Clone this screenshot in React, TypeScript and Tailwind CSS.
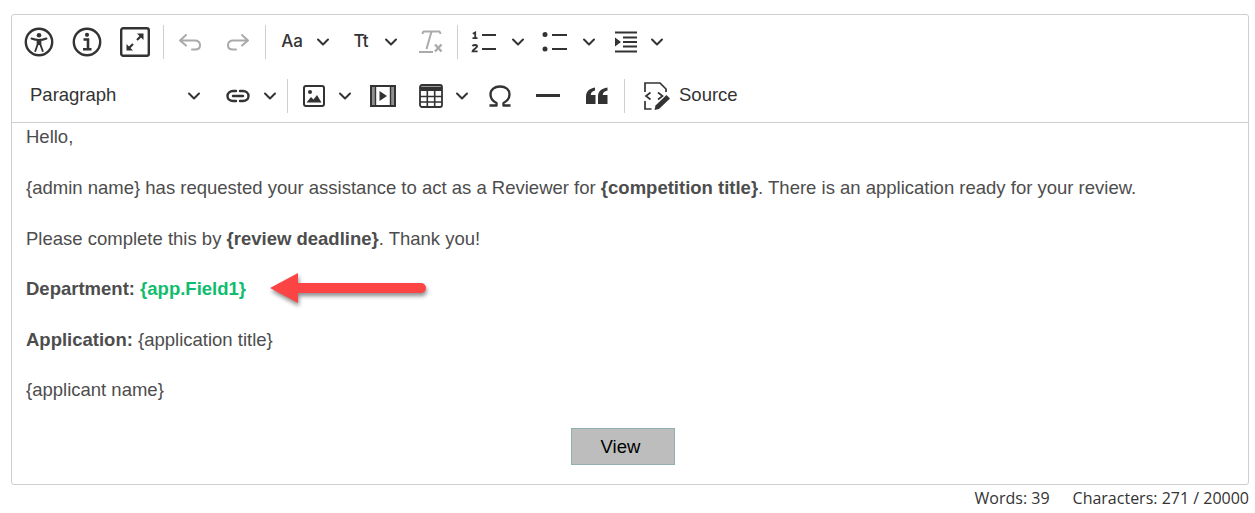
import React from "react"

const Chevron = ({ className = "" }: { className?: string }) => (
  <svg viewBox="0 0 14 10" className={`h-[10px] w-[14px] shrink-0 ${className}`} fill="none" stroke="#333" strokeWidth="2" strokeLinecap="round" strokeLinejoin="round">
    <path d="M2 2.5 7 7.5 12 2.5" />
  </svg>
)

const Sep = ({ className = "" }: { className?: string }) => <div className={`h-[34px] w-px shrink-0 bg-[#cfcfcf] ${className}`} />

const AccessIcon = () => (
  <svg viewBox="0 0 30 30" className="h-[30px] w-[30px]" fill="none" stroke="#333" strokeWidth="2.4">
    <circle cx="15" cy="15" r="13.2" />
    <circle cx="15" cy="8.2" r="2.3" fill="#333" stroke="none" />
    <path d="M7.5 11.5C10 12.5 12.5 13 15 13C17.5 13 20 12.5 22.5 11.5M13.6 13V17.5L11.3 24M16.4 13V17.5L18.7 24" strokeWidth="1.9" strokeLinecap="round" strokeLinejoin="round" />
    <path d="M13 13H17V18H13Z" fill="#333" stroke="none" />
  </svg>
)

const InfoIcon = () => (
  <svg viewBox="0 0 30 30" className="h-[30px] w-[30px]" fill="none" stroke="#333" strokeWidth="2.4">
    <circle cx="15" cy="15" r="13.2" />
    <circle cx="15" cy="7.8" r="2.1" fill="#333" stroke="none" />
    <path d="M11.5 12.5H16V21.5M11 22.2H19.5" strokeWidth="2.6" />
  </svg>
)

const ExpandIcon = () => (
  <svg viewBox="0 0 30 30" className="h-[30px] w-[30px]" fill="none" stroke="#333">
    <rect x="1.2" y="1.2" width="27.6" height="27.6" rx="2" strokeWidth="2.4" />
    <path d="M17 13 22 8M8 22 13 17" strokeWidth="2.2" />
    <path d="M17 6.5H23.5V13ZM6.5 17V23.5H13Z" fill="#333" stroke="none" />
  </svg>
)

const UndoIcon = ({ flip = false }: { flip?: boolean }) => (
  <svg viewBox="0 0 24 18" className={`h-[18px] w-[24px] ${flip ? "-scale-x-100" : ""}`} fill="none" stroke="#aaaaaa" strokeWidth="2" strokeLinecap="round" strokeLinejoin="round">
    <path d="M8 2 2 7.5 8 12.5M2 7.5H16.5C20 7.5 22 9.5 22 12.2C22 15 20 16.5 17 16.5H14" />
  </svg>
)

const ClearIcon = () => (
  <svg viewBox="0 0 26 26" className="h-[26px] w-[26px]" fill="none" stroke="#aaaaaa" strokeWidth="2">
    <path d="M5 2.5H22M5 2.5 4.5 5M22 2.5 22.3 5M13.5 2.5 8.5 20" />
    <path d="M1 23H15" />
    <path d="M17 15.5 23.5 22.5M23.5 15.5 17 22.5" strokeWidth="2.4" />
  </svg>
)

const NumListIcon = () => (
  <svg viewBox="0 0 26 22" className="h-[22px] w-[26px]" fill="none" stroke="#333" strokeWidth="2">
    <path d="M11 4H25M11 18H25" />
    <path d="M1.8 2.8 4.2 1.5V7M1.5 7.2H6.5" strokeWidth="1.8" />
    <path d="M1.6 15.2C2 13.6 6 13.6 6 15.4C6 17 2 18 1.6 20.4H6.6" strokeWidth="1.9" />
  </svg>
)

const BulletIcon = () => (
  <svg viewBox="0 0 26 22" className="h-[22px] w-[26px]" fill="none" stroke="#333" strokeWidth="2">
    <path d="M10 4H25M10 18H25" />
    <circle cx="3" cy="3.5" r="2.5" fill="#333" stroke="none" />
    <circle cx="3" cy="18" r="2.5" fill="#333" stroke="none" />
  </svg>
)

const IndentIcon = () => (
  <svg viewBox="0 0 24 22" className="h-[22px] w-[24px]" fill="none" stroke="#333" strokeWidth="2">
    <path d="M1 1.5H23M9 6.5H23M9 11H23M9 15.5H23M1 20.5H23" />
    <path d="M1 6.5 7 11 1 15.5Z" fill="#333" stroke="none" />
  </svg>
)

const LinkIcon = () => (
  <svg viewBox="0 0 24 14" className="h-[14px] w-[24px]" fill="none" stroke="#333" strokeWidth="2.4" strokeLinecap="round">
    <path d="M10 2H7C4 2 1.5 4 1.5 7C1.5 10 4 12 7 12H10M14 2H17C20 2 22.5 4 22.5 7C22.5 10 20 12 17 12H14M7 7H17" />
  </svg>
)

const ImageIcon = () => (
  <svg viewBox="0 0 22 22" className="h-[22px] w-[22px]" fill="none" stroke="#333">
    <rect x="1" y="1" width="20" height="20" rx="2" strokeWidth="2" />
    <circle cx="7" cy="7" r="2" fill="#333" stroke="none" />
    <path d="M3.5 17.5 8 12 10.5 14.5 14 10 18.5 17.5Z" fill="#333" stroke="none" />
  </svg>
)

const MediaIcon = () => (
  <svg viewBox="0 0 26 22" className="h-[22px] w-[26px]" fill="none" stroke="#333">
    <rect x="1" y="1" width="24" height="20" strokeWidth="2" />
    <path d="M5.5 1V21M20.5 1V21" strokeWidth="1.4" />
    <path d="M2 1H5V21H2ZM21 1H24V21H21Z" fill="#333" fillOpacity="0.55" stroke="none" />
    <path d="M9.5 6V16L17 11Z" fill="#333" stroke="none" />
  </svg>
)

const TableIcon = () => (
  <svg viewBox="0 0 24 24" className="h-[24px] w-[24px]" fill="none" stroke="#333">
    <rect x="1" y="1" width="22" height="22" rx="2" strokeWidth="1.8" />
    <path d="M1 2.5H23V7H1Z" fill="#333" stroke="none" />
    <path d="M1 12.5H23M1 18H23M8.3 7V23M15.7 7V23" strokeWidth="1.6" />
  </svg>
)

const OmegaIcon = () => (
  <svg viewBox="0 0 24 22" className="h-[22px] w-[24px]" fill="none" stroke="#333" strokeWidth="2.4">
    <path d="M1.5 20.5H8.5V18C4.5 16 2.5 13 2.5 9.5C2.5 4.5 6.5 1.5 12 1.5C17.5 1.5 21.5 4.5 21.5 9.5C21.5 13 19.5 16 15.5 18V20.5H22.5" strokeLinejoin="round" />
  </svg>
)

const QuoteIcon = () => (
  <svg viewBox="0 0 22 18" className="h-[18px] w-[22px]" fill="#333">
    <path d="M0 17V9.5C0 4.5 3 1.5 9 0.5V3.5C6 4.3 4.8 6 4.8 8H9.5V17ZM12 17V9.5C12 4.5 15 1.5 21.5 0.5V3.5C18 4.3 16.8 6 16.8 8H21.5V17Z" />
  </svg>
)

const SourceIcon = () => (
  <svg viewBox="0 0 28 30" className="h-[30px] w-[28px]" fill="none" stroke="#333" strokeWidth="1.7">
    <path d="M2 11V2H17L23 8V11M2 20V28H8.5" />
    <path d="M7.5 11.5 3 15 7.5 18.5M15 11.5 19.5 15 15 18.5" />
    <path d="M11.5 29 12.5 24.5 23.5 14 27 17.5 16 28Z" fill="#333" stroke="none" />
  </svg>
)

const Btn = ({ className, children }: { className: string; children: React.ReactNode }) => (
  <div className={`flex shrink-0 items-center justify-center ${className}`}>{children}</div>
)

const ArrowMark = () => (
  <svg viewBox="0 0 164 38" className="absolute left-[266px] top-[270px] h-[38px] w-[164px] drop-shadow-[1px_3px_2px_rgba(0,0,0,0.45)]">
    <path d="M4 18 32 3V13H155A5 5 0 0 1 155 23H32V33Z" fill="#fc4444" />
  </svg>
)

export default function App() {
  return (
    <div className="relative h-[513px] w-[1255px] overflow-hidden bg-white font-['Liberation_Sans',sans-serif] text-[18.5px] text-[#4d4d4d]">
      <div className="ml-[11px] w-[1238px] pt-[14px]">
        <div className="h-[471px] rounded-[3px] border border-[#cfcfcf]">
          <div className="h-[108px] border-b border-[#cfcfcf]">
            <div className="flex h-[54px] items-center pl-[12px]">
              <Btn className="w-[30px]"><AccessIcon /></Btn>
              <Btn className="ml-[18px] w-[30px]"><InfoIcon /></Btn>
              <Btn className="ml-[18px] w-[30px]"><ExpandIcon /></Btn>
              <Sep className="ml-[13px]" />
              <Btn className="ml-[13px] w-[26px]"><UndoIcon /></Btn>
              <Btn className="ml-[22px] w-[26px]"><UndoIcon flip /></Btn>
              <Sep className="ml-[14px]" />
              <Btn className="ml-[15px] w-[22px] font-['Inter',sans-serif] text-[17px] font-medium text-[#333]">Aa</Btn>
              <Chevron className="ml-[13px]" />
              <Btn className="ml-[22px] w-[18px] font-['Inter',sans-serif] text-[17px] font-medium text-[#333]">Tt</Btn>
              <Chevron className="ml-[14px]" />
              <Btn className="ml-[20px] w-[26px]"><ClearIcon /></Btn>
              <Sep className="ml-[13px]" />
              <Btn className="ml-[13px] w-[26px]"><NumListIcon /></Btn>
              <Chevron className="ml-[14px]" />
              <Btn className="ml-[17px] w-[26px]"><BulletIcon /></Btn>
              <Chevron className="ml-[14px]" />
              <Btn className="ml-[18px] w-[24px]"><IndentIcon /></Btn>
              <Chevron className="ml-[12px]" />
            </div>
            <div className="flex h-[53px] items-center pl-[18px]">
              <div className="mb-[2px] w-[156px] shrink-0 text-[#333]">Paragraph</div>
              <Chevron className="ml-[1px]" />
              <Btn className="ml-[25px] w-[24px]"><LinkIcon /></Btn>
              <Chevron className="ml-[13px]" />
              <Sep className="ml-[10px]" />
              <Btn className="ml-[15px] w-[22px]"><ImageIcon /></Btn>
              <Chevron className="ml-[13px]" />
              <Btn className="ml-[18px] w-[26px]"><MediaIcon /></Btn>
              <Btn className="ml-[23px] w-[24px]"><TableIcon /></Btn>
              <Chevron className="ml-[12px]" />
              <Btn className="ml-[19px] w-[24px]"><OmegaIcon /></Btn>
              <div className="ml-[24px] h-[3px] w-[24px] shrink-0 bg-[#333]" />
              <Btn className="ml-[26px] w-[22px]"><QuoteIcon /></Btn>
              <Sep className="ml-[16px]" />
              <Btn className="ml-[18px] w-[28px]"><SourceIcon /></Btn>
              <span className="mb-[2px] ml-[8px] text-[#333]">Source</span>
            </div>
          </div>
          <div className="pl-[14px]">
            <p className="mb-[24.4px] leading-[27px]">Hello,</p>
            <p className="mb-[23.4px] leading-[27px]">
              {"{admin name} has requested your assistance to act as a Reviewer for "}
              <b>{"{competition title}"}</b>
              . There is an application ready for your review.
            </p>
            <p className="mb-[23.4px] leading-[27px]">
              Please complete this by <b>{"{review deadline}"}</b>. Thank you!
            </p>
            <p className="mb-[23.4px] leading-[27px]">
              <b>Department: </b>
              <b className="text-[#10bd6e]">{"{app.Field1}"}</b>
            </p>
            <p className="mb-[23.4px] leading-[27px]">
              <b>Application:</b> {"{application title}"}
            </p>
            <p className="mb-[25px] leading-[27px]">{"{applicant name}"}</p>
            <div className="flex justify-center pr-[28px]">
              <div className="flex h-[37px] w-[104px] items-center justify-center border border-[#8fb0b0] bg-[#bdbdbd] pr-[5px] text-black">View</div>
            </div>
          </div>
        </div>
        <div className="flex h-[25px] items-center justify-end gap-[23px] font-['Open_Sans',sans-serif] text-[16px] text-[#333]">
          <span>Words: 39</span>
          <span>Characters: 271 / 20000</span>
        </div>
      </div>
      <ArrowMark />
    </div>
  )
}
